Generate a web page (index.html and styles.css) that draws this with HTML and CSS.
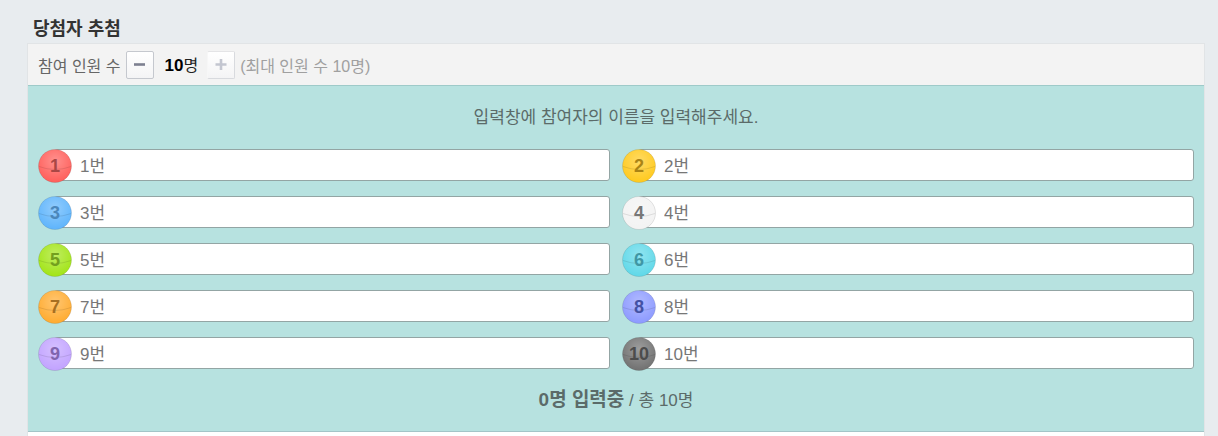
FILE: index.html
```html
<!DOCTYPE html>
<html lang="ko">
<head>
<meta charset="utf-8">
<title>당첨자 추첨</title>
<link rel="stylesheet" href="styles.css">
</head>
<body>
<svg class="defs" aria-hidden="true">
  <defs>
    <radialGradient id="shade" cx="50%" cy="35%" r="60%">
      <stop offset="0" stop-color="#fff" stop-opacity=".3"/>
      <stop offset="1" stop-color="#fff" stop-opacity="0"/>
    </radialGradient>
    <symbol id="ball" viewBox="0 0 34 34">
      <circle cx="17" cy="17" r="16.5" fill="currentColor" stroke="#000" stroke-opacity=".1"/>
      <circle cx="17" cy="17" r="16.5" fill="url(#shade)"/>
      <path d="M1 17.5Q17 23.5 33 17.5" fill="none" stroke="#000" stroke-opacity=".1"/>
    </symbol>
  </defs>
</svg>
<main class="page">
  <h1 class="title">당첨자 추첨</h1>
  <section class="panel">
    <div class="toolbar">
      <span class="toolbar-label">참여 인원 수</span>
      <button class="step" type="button" aria-label="인원 줄이기"><svg viewBox="0 0 12 12"><path d="M0 5.5H11" stroke="currentColor" stroke-width="2.6"/></svg></button>
      <span class="count"><b>10</b>명</span>
      <button class="step step-off" type="button" aria-label="인원 늘리기" disabled><svg viewBox="0 0 12 12"><path d="M0.500 5.500H11.500M6 0V11" stroke="currentColor" stroke-width="2.600"/></svg></button>
      <span class="limit">(최대 인원 수 10명)</span>
    </div>
    <form class="entry">
      <p class="guide">입력창에 참여자의 이름을 입력해주세요.</p>
      <div class="fields">
        <label class="field red"><span class="ball"><svg><use href="#ball"/></svg><b>1</b></span><input type="text" placeholder="1번"></label>
        <label class="field yellow"><span class="ball"><svg><use href="#ball"/></svg><b>2</b></span><input type="text" placeholder="2번"></label>
        <label class="field blue"><span class="ball"><svg><use href="#ball"/></svg><b>3</b></span><input type="text" placeholder="3번"></label>
        <label class="field white"><span class="ball"><svg><use href="#ball"/></svg><b>4</b></span><input type="text" placeholder="4번"></label>
        <label class="field green"><span class="ball"><svg><use href="#ball"/></svg><b>5</b></span><input type="text" placeholder="5번"></label>
        <label class="field cyan"><span class="ball"><svg><use href="#ball"/></svg><b>6</b></span><input type="text" placeholder="6번"></label>
        <label class="field orange"><span class="ball"><svg><use href="#ball"/></svg><b>7</b></span><input type="text" placeholder="7번"></label>
        <label class="field indigo"><span class="ball"><svg><use href="#ball"/></svg><b>8</b></span><input type="text" placeholder="8번"></label>
        <label class="field purple"><span class="ball"><svg><use href="#ball"/></svg><b>9</b></span><input type="text" placeholder="9번"></label>
        <label class="field gray"><span class="ball"><svg><use href="#ball"/></svg><b>10</b></span><input type="text" placeholder="10번"></label>
      </div>
      <p class="status"><strong>0명 입력중</strong> / 총 10명</p>
    </form>
    <div class="footer"></div>
  </section>
</main>
</body>
</html>
```
FILE: styles.css
```css
* { box-sizing: border-box; }

body {
  margin: 0;
  background: #e8ecef;
  color: #666;
  font-family: "Liberation Sans", "Noto Sans CJK KR", sans-serif;
  font-size: 16px;
}

.defs { position: absolute; width: 0; height: 0; }

.page {
  display: flex;
  flex-direction: column;
  min-height: 100vh;
  padding: 15px 13px 0 27px;
}

.title {
  margin: 0;
  padding: 0 6px;
  color: #333;
  font-size: 18px;
  line-height: 28px;
}

.panel {
  display: flex;
  flex: 1;
  flex-direction: column;
  border: 1px solid #e1e4e6;
  border-bottom: 0;
  background: #fff;
}

.toolbar {
  display: flex;
  align-items: center;
  height: 41px;
  padding: 0 10px;
  background: #f3f3f3;
  line-height: 24px;
}

.toolbar-label { padding-top: 4px; }

.step {
  display: flex;
  align-items: center;
  justify-content: center;
  width: 28px;
  height: 28px;
  margin: 0 0 0 5px;
  padding: 0;
  border: 1px solid #c5c8ce;
  border-radius: 2px;
  background: linear-gradient(#fff, #f4f4f5);
  color: #7d8090;
}

.step svg { width: 12px; height: 12px; }

.step-off {
  margin-left: 9px;
  border-color: #d8dade;
  border-left-color: #f7f7f7;
  border-top-color: #e4e4e6;
  color: #c3c6d0;
}

.count {
  padding: 2px 0 0 11px;
  color: #222;
}

.count b {
  color: #000;
  font-size: 17px;
}

.limit {
  padding: 4px 0 0 5px;
  color: #a0a0a0;
}

.entry {
  padding: 18px 10px 16px;
  border-top: 1px solid #9ecac9;
  border-bottom: 1px solid #a3c5c8;
  background: #b7e2e0;
  color: #5b6b69;
  font-size: 17px;
  line-height: 28px;
}

.guide, .status { margin: 0; text-align: center; }

.guide { padding-bottom: 17px; }

.status { padding-top: 17px; }

.status strong { font-size: 19px; }

.fields {
  display: grid;
  grid-template-columns: 1fr 1fr;
  gap: 15px 12px;
}

.field {
  position: relative;
  display: flex;
  height: 32px;
  padding-left: 16px;
}

.field input {
  width: 100%;
  padding: 3px 8px 0 25px;
  border: 1px solid #93a5a4;
  border-radius: 3px;
  background: #fff;
  color: #555;
  font: inherit;
}

.field input::placeholder { color: #777; opacity: 1; }

.ball {
  position: absolute;
  top: 0;
  left: 0;
  display: grid;
  place-items: center;
  width: 34px;
  height: 34px;
}

.ball svg, .ball b { grid-area: 1 / 1; }

.ball svg { width: 34px; height: 34px; }

.ball b { position: relative; font-size: 18px; }

.red svg { color: #ff625e; }
.red b { color: #a94745; }
.yellow svg { color: #ffcb22; }
.yellow b { color: #ab8415; }
.blue svg { color: #62b6fc; }
.blue b { color: #4b87bb; }
.white svg { color: #f3f3f3; }
.white b { color: #777; }
.green svg { color: #a4e51c; }
.green b { color: #739f1e; }
.cyan svg { color: #63d9e9; }
.cyan b { color: #3f97a5; }
.orange svg { color: #ffad34; }
.orange b { color: #a76f22; }
.indigo svg { color: #8f9cff; }
.indigo b { color: #4351a4; }
.purple svg { color: #c3a5ff; }
.purple b { color: #8165ae; }
.gray svg { color: #747474; }
.gray b { color: #4c4c4c; }
```
